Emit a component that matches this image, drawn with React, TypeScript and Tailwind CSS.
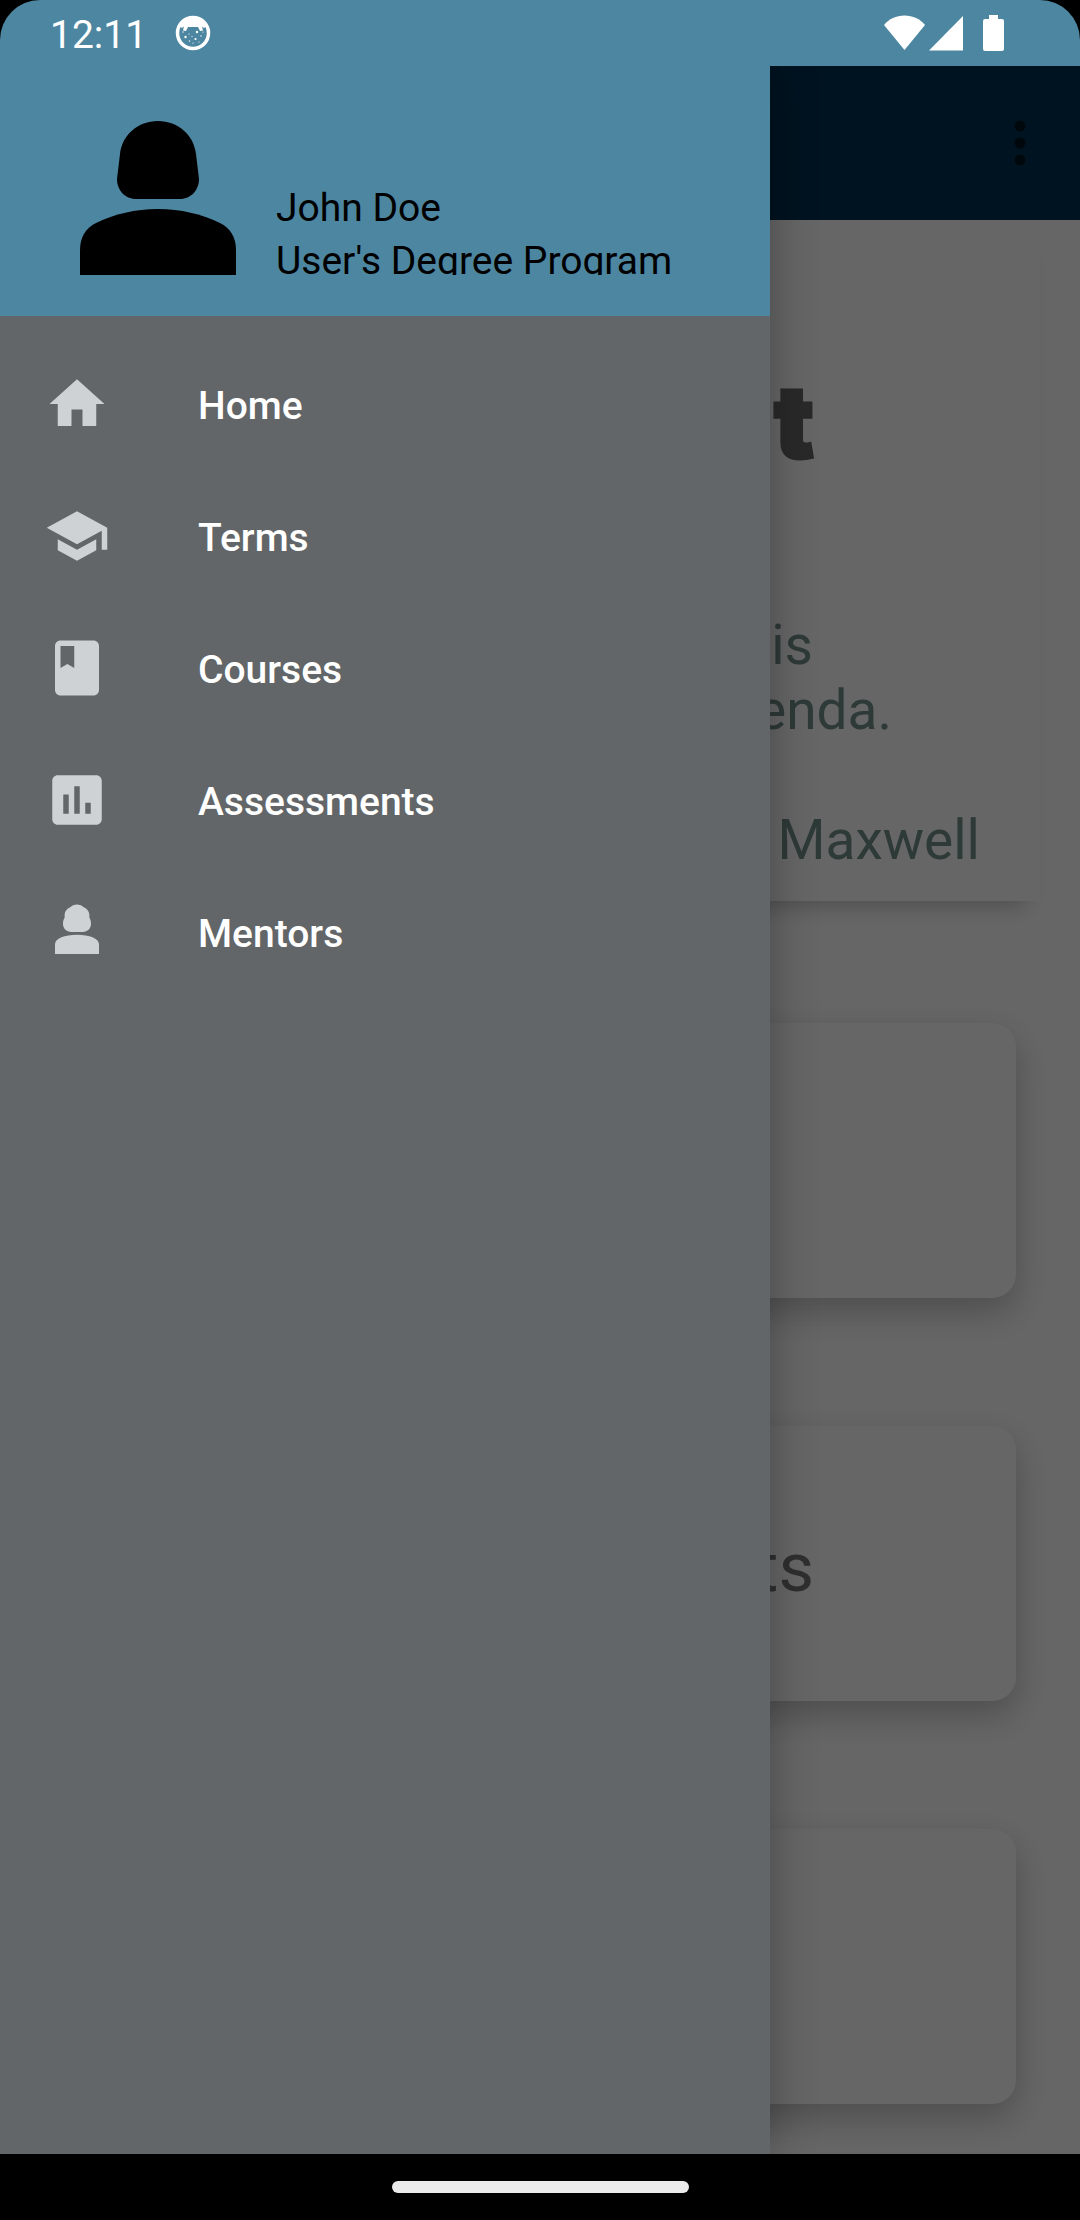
import type { ReactNode } from "react";

const menuItems = [
  {
    label: "Home",
    path: "M10 20v-6h4v6h5v-8h3L12 3 2 12h3v8z",
  },
  {
    label: "Terms",
    path: "M5 13.18v4L12 21l7-3.82v-4L12 17l-7-3.82zM12 3L1 9l11 6 9-4.91V17h2V9L12 3z",
  },
  {
    label: "Courses",
    path: "M18 2H6c-1.1 0-2 .9-2 2v16c0 1.1.9 2 2 2h12c1.1 0 2-.9 2-2V4c0-1.1-.9-2-2-2zM6 4h5v8l-2.5-1.5L6 12V4z",
  },
  {
    label: "Assessments",
    path: "M19 3H5c-1.1 0-2 .9-2 2v14c0 1.1.9 2 2 2h14c1.1 0 2-.9 2-2V5c0-1.1-.9-2-2-2zM9 17H7v-7h2v7zm4 0h-2V7h2v10zm4 0h-2v-4h2v4z",
  },
  {
    label: "Mentors",
    path: "M12 2c-1 0-1.8.4-2.4 1C8.300 3.500 7.500 4.600 7.500 5.900v.9C7.100 7.400 6.900 8.200 6.900 9c0 1.700 1.300 3 3 3h4.200c1.700 0 3-1.300 3-3 0-.8-.2-1.600-.6-2.200v-.9c0-1.300-.8-2.400-2.100-2.900C13.800 2.400 13 2 12 2zM4 20v-3.500C4 14.300 7.500 13 12 13s8 1.300 8 3.500V20z",
  },
];

const StatusBar = () => (
  <header className="h-[66px] shrink-0 flex items-center justify-between rounded-t-[40px] bg-[#4d86a0] pl-[50px] pr-[76px] text-white">
    <div className="flex items-center gap-7">
      <span className="text-[39px] leading-[46px] pt-1">12:11</span>
      <svg className="h-9 w-9" viewBox="0 0 36 36" aria-hidden="true">
        <circle cx="18" cy="18" r="15.500" fill="none" stroke="currentColor" strokeWidth="3.500" />
        <path
          d="M4 11C7 4 13 1.500 18 1.500S29 4 32 11l-3 2-2-1.500 1 4-3 .5-2-4h-10l-2 4-3-.5 1-4L7 13z"
          fill="currentColor"
        />
        <g fill="currentColor">
          <circle cx="10.500" cy="22" r="1.200" />
          <circle cx="22" cy="17" r="1.200" />
          <circle cx="20.500" cy="24" r="1.100" />
          <circle cx="14" cy="19" r=".6" />
          <circle cx="17" cy="21.500" r=".6" />
          <circle cx="26" cy="21" r=".7" />
          <circle cx="14.500" cy="26" r=".7" />
          <circle cx="8" cy="17" r=".7" />
          <circle cx="24" cy="27" r=".6" />
          <circle cx="18" cy="28" r=".6" />
          <circle cx="28" cy="17" r=".6" />
        </g>
      </svg>
    </div>
    <div className="flex items-center gap-1">
      <svg className="h-9 w-[41px]" viewBox="0 0 41 36" fill="currentColor" aria-hidden="true">
        <path d="M0 10C5 4 12 .5 20.500 .5S36 4 41 10L20.500 35z" />
      </svg>
      <svg className="h-9 w-[34px]" viewBox="0 0 34 36" fill="currentColor" aria-hidden="true">
        <path d="M34 1v34.500H0z" />
      </svg>
      <svg className="ml-4 h-9 w-[21px]" viewBox="0 0 21 36" fill="currentColor" aria-hidden="true">
        <path d="M6 0h9v4h4q2 0 2 2v28q0 2-2 2H2q-2 0-2-2V6q0-2 2-2h4z" />
      </svg>
    </div>
  </header>
);

const AppBar = () => (
  <div className="h-[154px] flex items-center justify-end bg-[#003050] pr-7">
    <button type="button" aria-label="More options" className="h-[66px] w-[66px] text-black/54">
      <svg className="h-full w-full" viewBox="0 0 66 66" fill="currentColor" aria-hidden="true">
        <circle cx="34" cy="16" r="5.500" />
        <circle cx="34" cy="33" r="5.500" />
        <circle cx="34" cy="50" r="5.500" />
      </svg>
    </button>
  </div>
);

const Card = ({ children }: { children?: ReactNode }) => (
  <div className="h-[275px] flex items-center justify-end rounded-3xl bg-white pt-2 pr-[202px] text-[69px] leading-[80px] text-[#757575] shadow-[0_14px_34px_rgba(0,0,0,0.24)]">
    {children}
  </div>
);

const HomePage = () => (
  <main className="flex-1 bg-white pb-[50px]">
    <section className="mx-10 bg-white pt-[142px] pb-7 text-right shadow-[0_20px_20px_-14px_rgba(0,0,0,0.22)]">
      <h1 className="pr-[226px] font-[Inter,sans-serif] text-[100px] leading-[120px] font-black text-[#676767] [-webkit-text-stroke:3px_#676767] [stroke-linejoin:round]">
        t
      </h1>
      <div className="pt-[131px] text-[55px] leading-[65px] text-[#73918c]">
        <p className="pr-[227px]">is</p>
        <p className="pr-[148px]">enda.</p>
        <p className="pt-[65px] pr-[60px]">Maxwell</p>
      </div>
    </section>
    <div className="mx-16 mt-[122px] flex flex-col gap-32">
      <Card />
      <Card>ts</Card>
      <Card />
    </div>
  </main>
);

const Drawer = () => (
  <aside className="absolute inset-y-0 left-0 w-[770px] max-w-full bg-[#626668] shadow-[0_0_44px_rgba(0,0,0,0.3)]">
    <div className="h-[250px] flex items-start gap-10 bg-[#4d86a0] pt-[55px] pl-20 text-black">
      <svg className="h-[154px] w-[156px] shrink-0" viewBox="0 0 156 154" fill="currentColor" aria-hidden="true">
        <path d="M78 0C98 0 114 14 116 33L119 58C119 69 111 78 100 78H56C45 78 37 69 37 58L40 33C42 14 58 0 78 0Z" />
        <path d="M0 154V129C0 116 6 107 16 102C35 93 55 88 78 88C101 88 121 93 140 102C150 107 156 116 156 129V154Z" />
      </svg>
      <div className="h-[154px] overflow-hidden pt-[61px] text-[39px] leading-[53px] whitespace-nowrap">
        <p>John Doe</p>
        <p>User's Degree Program</p>
      </div>
    </div>
    <nav className="pt-[22px]" aria-label="Main">
      <ul>
        {menuItems.map((item) => (
          <li key={item.label}>
            <a href="#" className="h-[132px] flex items-center gap-[88px] pl-11">
              <svg className="h-[66px] w-[66px] text-[#cfd2d4]" viewBox="0 0 24 24" fill="currentColor" aria-hidden="true">
                <path d={item.path} />
              </svg>
              <span className="mt-1 text-[39px] leading-[46px] font-medium text-white">{item.label}</span>
            </a>
          </li>
        ))}
      </ul>
    </nav>
  </aside>
);

const App = () => (
  <div className="min-h-screen flex flex-col bg-black font-[Roboto,sans-serif]">
    <StatusBar />
    <div className="relative flex-1 flex flex-col overflow-hidden">
      <AppBar />
      <HomePage />
      {/* Scrim behind the open drawer */}
      <div className="absolute inset-0 bg-black/60" />
      <Drawer />
    </div>
    <footer className="h-[66px] shrink-0 flex items-center justify-center bg-black">
      <div className="h-3 w-[297px] rounded-full bg-[#ebebeb]" />
    </footer>
  </div>
);

export default App;
